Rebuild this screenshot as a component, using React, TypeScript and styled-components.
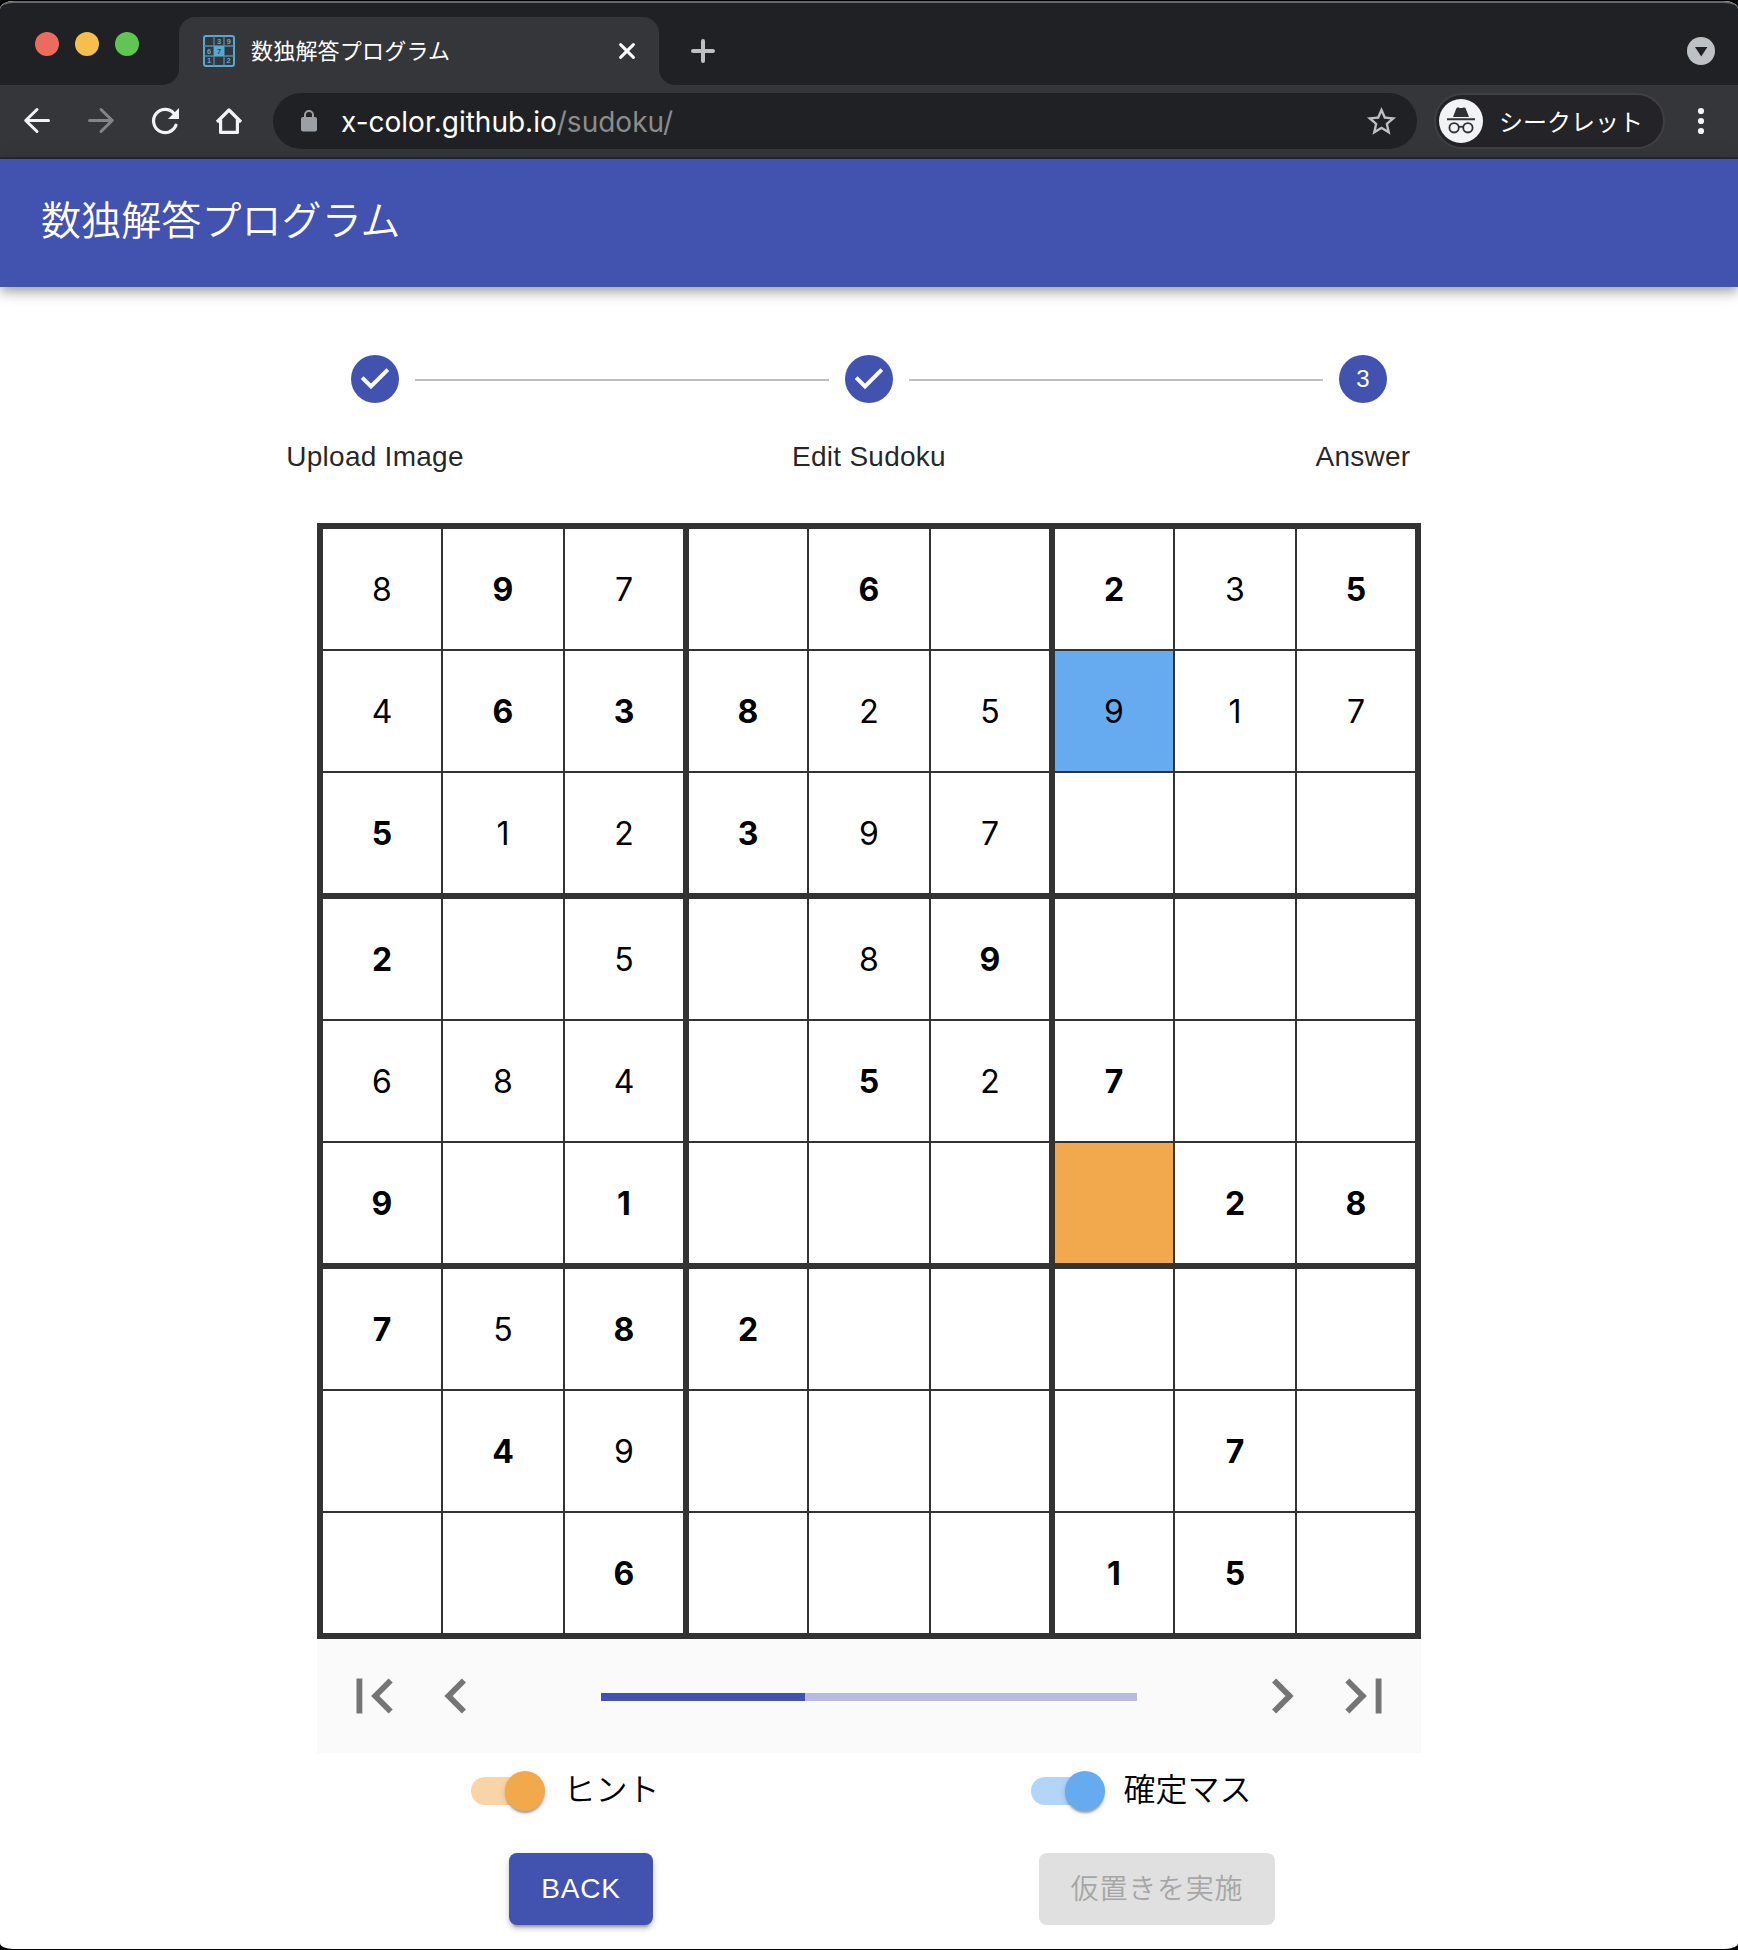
import React from "react";
import styled, { createGlobalStyle } from "styled-components";

const PRIMARY = "#4252af";
const INK = "#333333";
const HINT = "#f2a94e";
const FIXED = "#66aaf0";

const GlobalStyle = createGlobalStyle`
  *, *::before, *::after { box-sizing: border-box; }
  html, body { margin: 0; padding: 0; background: #000; }
  body { font-family: "Liberation Sans", "Noto Sans CJK JP", sans-serif; }
  svg { display: block; flex: none; overflow: visible; }
`;

const Window = styled.div`
  width: 1738px;
  height: 1948px;
  margin-top: 1px;
  background: #fff;
  border-radius: 14px 14px 13px 13px / 8px 8px 6px 6px;
  overflow: hidden;
  display: flex;
  flex-direction: column;
`;

/* ---------- browser chrome ---------- */

const TabStrip = styled.div`
  height: 84px;
  flex: none;
  background: #202124;
  border-top: 2px solid #67666a;
  border-radius: 14px 14px 0 0 / 8px 8px 0 0;
  display: flex;
  align-items: flex-end;
`;

const Lights = styled.div`
  display: flex;
  gap: 16px;
  width: 179px;
  padding: 0 0 29px 35px;
`;

const Light = styled.span<{ $color: string }>`
  width: 24px;
  height: 24px;
  border-radius: 50%;
  background: ${(p) => p.$color};
`;

const Tab = styled.div`
  position: relative;
  width: 480px;
  height: 68px;
  padding: 0 24px;
  border-radius: 16px 16px 0 0;
  background: #35363a;
  display: flex;
  align-items: center;

  &::before,
  &::after {
    content: "";
    position: absolute;
    bottom: 0;
    width: 16px;
    height: 16px;
  }
  &::before {
    left: -16px;
    background: radial-gradient(circle at 0 0, transparent 15.5px, #35363a 16.2px);
  }
  &::after {
    right: -16px;
    background: radial-gradient(circle at 100% 0, transparent 15.5px, #35363a 16.2px);
  }
`;

const TabTitle = styled.span`
  flex: 1;
  margin-left: 16px;
  padding-bottom: 4px;
  color: #fff;
  font: 400 22px/32px "Noto Sans CJK JP", sans-serif;
  letter-spacing: 0.2px;
`;

const NewTab = styled.div`
  flex: 1;
  height: 68px;
  padding: 0 23px 0 32px;
  display: flex;
  align-items: center;
  justify-content: space-between;
`;

const Toolbar = styled.div`
  height: 74px;
  flex: none;
  padding-left: 5px;
  background: #35363a;
  border-bottom: 2px solid #28292c;
  display: flex;
  align-items: center;
`;

const ToolButton = styled.span<{ $width?: number }>`
  width: ${(p) => p.$width ?? 64}px;
  height: 64px;
  display: flex;
  align-items: center;
  justify-content: center;
`;

const Omnibox = styled.div`
  width: 1144px;
  height: 56px;
  margin-left: 12px;
  padding: 0 18px 0 28px;
  border-radius: 28px;
  background: #202124;
  display: flex;
  align-items: center;
`;

const Url = styled.span`
  flex: 1;
  margin-left: 24px;
  padding-top: 1px;
  color: #8b8c8e;
  font: 400 28px/36px Inter, "Liberation Sans", sans-serif;
`;

const Host = styled.span`
  color: #fff;
`;

const Incognito = styled.div`
  width: 231px;
  height: 56px;
  margin-left: 17px;
  padding-left: 3px;
  border: 2px solid #3f3f44;
  border-radius: 28px;
  background: #242428;
  display: flex;
  align-items: center;
  gap: 16px;
  color: #fff;
  font: 400 24px/36px "Noto Sans CJK JP", sans-serif;
`;

/* ---------- page ---------- */

const AppBar = styled.header`
  position: relative;
  height: 128px;
  flex: none;
  padding: 0 41px;
  background: ${PRIMARY};
  color: #fff;
  display: flex;
  align-items: center;
  box-shadow: 0 4px 8px -2px rgba(0, 0, 0, 0.2), 0 8px 10px rgba(0, 0, 0, 0.14),
    0 2px 20px rgba(0, 0, 0, 0.12);
`;

const AppTitle = styled.h1`
  margin: 0 0 11px;
  font: 350 40px/64px "Noto Sans CJK JP", sans-serif;
  letter-spacing: 0.1px;
`;

const Stepper = styled.ol`
  list-style: none;
  margin: 0;
  padding: 68px 0 0 128px;
  height: 236px;
  flex: none;
  display: flex;
`;

const Step = styled.li`
  width: 494px;
  height: 124px;
  display: grid;
  grid-template-columns: 1fr 48px 1fr;
  column-gap: 16px;
  grid-template-rows: 48px 48px;
  row-gap: 28px;
  align-items: center;
`;

const Rail = styled.span<{ $shown: boolean }>`
  height: 2px;
  margin-top: 2px;
  background: ${(p) => (p.$shown ? "#bdbdbd" : "transparent")};
`;

const StepDot = styled.span`
  width: 48px;
  height: 48px;
  border-radius: 50%;
  background: ${PRIMARY};
  color: #fff;
  font-size: 24px;
  line-height: 48px;
  display: flex;
  align-items: center;
  justify-content: center;
`;

const StepLabel = styled.span`
  grid-column: 1 / -1;
  padding-top: 4px;
  text-align: center;
  color: rgba(0, 0, 0, 0.87);
  font-size: 28px;
  line-height: 40px;
  letter-spacing: 0.26px;
`;

const Panel = styled.section`
  width: 1104px;
  margin: 0 auto;
  flex: none;
`;

const Board = styled.div`
  display: grid;
  grid-template-columns: repeat(3, 360px);
  grid-template-rows: repeat(3, 364px);
  gap: 6px;
  padding: 6px;
  background: ${INK};
`;

const Block = styled.div`
  display: grid;
  grid-template-columns: 118px 120px 118px;
  grid-template-rows: repeat(3, 120px);
  gap: 2px;
`;

const Cell = styled.div<{ $given: boolean; $fill: string }>`
  display: flex;
  align-items: center;
  justify-content: center;
  padding-top: 2px;
  background: ${(p) => p.$fill};
  color: #000;
  font: ${(p) => (p.$given ? 700 : 400)} 32px/40px Inter, sans-serif;
`;

const Player = styled.div`
  height: 114px;
  padding: 0 22px;
  background: #fafafa;
  color: #757575;
  display: flex;
  align-items: center;
  justify-content: space-between;
`;

const NavGroup = styled.div`
  display: flex;
  gap: 12px;
`;

const ProgressTrack = styled.div`
  width: 536px;
  height: 8px;
  margin-top: 2px;
  background: #b6bcde;
`;

const ProgressFill = styled.div`
  height: 100%;
  background: ${PRIMARY};
`;

const Pair = styled.div<{ $height: number }>`
  width: 1152px;
  height: ${(p) => p.$height}px;
  margin: 0 auto;
  flex: none;
  display: grid;
  grid-template-columns: 1fr 1fr;
  align-items: center;
  justify-items: center;
`;

const SwitchLabel = styled.label`
  display: flex;
  align-items: center;
  padding-right: 31px;
  color: #000;
  font: 350 32px/48px "Noto Sans CJK JP", sans-serif;
`;

const SwitchText = styled.span`
  margin: -9px 0 0 18px;
`;

const SwitchTrack = styled.span<{ $color: string }>`
  width: 74px;
  height: 28px;
  display: flex;
  align-items: center;
  justify-content: flex-end;
  border-radius: 14px;
  background: linear-gradient(
    to right,
    color-mix(in srgb, ${(p) => p.$color} 50%, white) 54px,
    transparent 54px
  );
`;

const SwitchThumb = styled.span<{ $color: string }>`
  width: 40px;
  height: 40px;
  flex: none;
  border-radius: 50%;
  background: ${(p) => p.$color};
  box-shadow: 0 4px 2px -2px rgba(0, 0, 0, 0.2), 0 2px 2px rgba(0, 0, 0, 0.14),
    0 2px 6px rgba(0, 0, 0, 0.12);
`;

const Button = styled.button`
  height: 72px;
  padding: 0 32px;
  border: 0;
  border-radius: 8px;
  background: ${PRIMARY};
  color: #fff;
  font: 350 28px/48px "Liberation Sans", "Noto Sans CJK JP", sans-serif;
  letter-spacing: 0.8px;
  box-shadow: 0 6px 2px -4px rgba(0, 0, 0, 0.2), 0 4px 4px rgba(0, 0, 0, 0.14),
    0 2px 10px rgba(0, 0, 0, 0.12);

  &:disabled {
    padding: 1px 31.5px 0;
    background: #e0e0e0;
    color: #a6a6a6;
    box-shadow: none;
  }
`;

/* ---------- icons ---------- */

const Favicon = () => (
  <svg width="32" height="32" viewBox="0 0 32 32">
    <rect x="1" y="1" width="30" height="30" rx="2" fill="none" stroke="#58a9d0" strokeWidth="2" />
    <path d="M11 1V31M21 1V31M1 11H31M1 21H31" stroke="#4a8fb2" strokeWidth="1.3" />
    <rect x="11" y="11" width="10" height="10" fill="#58a9d0" />
    <g fontFamily="Liberation Sans, sans-serif" fontWeight="700" fontSize="7.5" textAnchor="middle" fill="#58a9d0">
      <text x="16" y="9">3</text>
      <text x="25.8" y="9">9</text>
      <text x="6.2" y="18.7">6</text>
      <text x="16" y="18.7" fill="#2b4a5c">7</text>
      <text x="6.2" y="28.4">1</text>
      <text x="25.6" y="28.4">2</text>
    </g>
  </svg>
);

const CloseIcon = () => (
  <svg width="16" height="16" viewBox="0 0 16 16" stroke="#fff" strokeWidth="3" strokeLinecap="round">
    <path d="M1.6 1.6L14.4 14.4M14.4 1.6L1.6 14.4" />
  </svg>
);

const PlusIcon = () => (
  <svg width="24" height="24" viewBox="0 0 24 24" stroke="#bdc1c6" strokeWidth="4" strokeLinecap="round">
    <path d="M2 12H22M12 2V22" />
  </svg>
);

const TabSearchIcon = () => (
  <svg width="28" height="28" viewBox="0 0 28 28">
    <circle cx="14" cy="14" r="14" fill="#bdc1c6" />
    <path d="M8 10H20.4L14.2 19.5Z" fill="#202124" />
  </svg>
);

const ArrowIcon = ({ forward = false }: { forward?: boolean }) => (
  <svg
    width="28"
    height="28"
    viewBox="0 0 28 28"
    fill="none"
    stroke={forward ? "#848587" : "#f1f3f4"}
    strokeWidth="3"
    strokeLinecap="round"
    strokeLinejoin="round"
  >
    <path d={forward ? "M2.5 13.5H25M14 2.5L25.3 13.5L14 24.5" : "M25.5 13.5H3M14 2.5L2.7 13.5L14 24.5"} />
  </svg>
);

const ReloadIcon = () => (
  <svg width="28" height="28" viewBox="0 0 28 28">
    <path d="M25 18.2A11.6 11.6 0 1 1 22.6 6" fill="none" stroke="#f1f3f4" strokeWidth="3.2" strokeLinecap="round" />
    <path d="M28 1V12H17Z" fill="#f1f3f4" />
  </svg>
);

const HomeIcon = () => (
  <svg width="28" height="28" viewBox="0 0 28 28" fill="none" stroke="#f1f3f4" strokeWidth="3.2" strokeLinejoin="round">
    <path d="M5.6 12.5V25.4H22.4V12.5" />
    <path d="M2 15L14 3L26 15" />
  </svg>
);

const LockIcon = () => (
  <svg width="16" height="22" viewBox="0 0 16 22">
    <rect x="0" y="7" width="16" height="14.5" rx="2" fill="#9aa0a6" />
    <path d="M4 8V5a4 4 0 0 1 8 0V8" fill="none" stroke="#9aa0a6" strokeWidth="2" />
  </svg>
);

const StarIcon = () => (
  <svg width="35" height="35" viewBox="0 0 24 24" fill="#bebfc1">
    <path d="M22 9.24l-7.19-.62L12 2 9.19 8.63 2 9.24l5.46 4.73L5.82 21 12 17.27 18.18 21l-1.63-7.03L22 9.24zM12 15.4l-3.76 2.27 1-4.28-3.32-2.88 4.38-.38L12 6.1l1.71 4.04 4.38.38-3.32 2.88 1 4.28L12 15.4z" />
  </svg>
);

const IncognitoIcon = () => (
  <svg width="44" height="44" viewBox="0 0 44 44">
    <circle cx="22" cy="22" r="22" fill="#f1f3f4" />
    <path d="M14 18L17.3 9.5Q17.9 8 19.4 8.5Q22 9.5 24.6 8.5Q26.1 8 26.7 9.5L30 18Z" fill="#303134" />
    <path d="M8 20.2H36" stroke="#303134" strokeWidth="2" />
    <g fill="none" stroke="#303134" strokeWidth="1.8">
      <circle cx="15.1" cy="28.8" r="4.7" />
      <circle cx="28.9" cy="28.8" r="4.7" />
      <path d="M19.6 28.2Q22 27.2 24.4 28.2" />
    </g>
  </svg>
);

const MenuIcon = () => (
  <svg width="6" height="28" viewBox="0 0 6 28" fill="#f1f3f4">
    <circle cx="3" cy="4" r="3.1" />
    <circle cx="3" cy="14" r="3.1" />
    <circle cx="3" cy="24" r="3.1" />
  </svg>
);

const CheckIcon = () => (
  <svg width="48" height="48" viewBox="0 0 24 24" fill="none" stroke="#fff" strokeWidth="2">
    <path d="M5.6 11.3L10 15.7L18.4 7.3" />
  </svg>
);

const NAV_PATHS = {
  first: "M18.41 16.59L13.82 12l4.59-4.59L17 6l-6 6 6 6zM6 6h2v12H6z",
  previous: "M15.41 16.59L10.83 12l4.58-4.59L14 6l-6 6 6 6 1.41-1.41z",
  next: "M8.59 16.59L13.17 12 8.59 7.41 10 6l6 6-6 6-1.41-1.41z",
  last: "M5.59 7.41L10.18 12l-4.59 4.59L7 18l6-6-6-6zM16 6h2v12h-2z",
};

const NavIcon = ({ name }: { name: keyof typeof NAV_PATHS }) => (
  <svg width="70" height="70" viewBox="0 0 24 24" fill="currentColor">
    <path d={NAV_PATHS[name]} />
  </svg>
);

/* ---------- data ---------- */

/* "." is an empty square, a trailing "*" marks a digit of the original puzzle */
const ROWS = [
  "8 9* 7 . 6* . 2* 3 5*",
  "4 6* 3* 8* 2 5 9 1 7",
  "5* 1 2 3* 9 7 . . .",
  "2* . 5 . 8 9* . . .",
  "6 8 4 . 5* 2 7* . .",
  "9* . 1* . . . . 2* 8*",
  "7* 5 8* 2* . . . . .",
  ". 4* 9 . . . . 7* .",
  ". . 6* . . . 1* 5* .",
].map((row) => row.split(" "));

const FILLS: Record<string, string> = { "1-6": FIXED, "5-6": HINT };
const THREE = [0, 1, 2];
const STEPS = ["Upload Image", "Edit Sudoku", "Answer"];
const ACTIVE_STEP = 2;
const PROGRESS = 38;

function SudokuBoard() {
  return (
    <Board>
      {THREE.flatMap((br) =>
        THREE.map((bc) => (
          <Block key={`${br}${bc}`}>
            {THREE.flatMap((r) =>
              THREE.map((c) => {
                const row = br * 3 + r;
                const col = bc * 3 + c;
                const value = ROWS[row][col];
                return (
                  <Cell
                    key={`${row}-${col}`}
                    $given={value.endsWith("*")}
                    $fill={FILLS[`${row}-${col}`] ?? "#fff"}
                  >
                    {value === "." ? "" : value[0]}
                  </Cell>
                );
              })
            )}
          </Block>
        ))
      )}
    </Board>
  );
}

function Toggle({ color, children }: { color: string; children: React.ReactNode }) {
  return (
    <SwitchLabel>
      <SwitchTrack $color={color}>
        <SwitchThumb $color={color} />
      </SwitchTrack>
      <SwitchText>{children}</SwitchText>
    </SwitchLabel>
  );
}

export default function App() {
  return (
    <>
      <GlobalStyle />
      <Window>
        <TabStrip>
          <Lights>
            <Light $color="#ed6a5e" />
            <Light $color="#f5bf4f" />
            <Light $color="#61c554" />
          </Lights>
          <Tab>
            <Favicon />
            <TabTitle>数独解答プログラム</TabTitle>
            <CloseIcon />
          </Tab>
          <NewTab>
            <PlusIcon />
            <TabSearchIcon />
          </NewTab>
        </TabStrip>
        <Toolbar>
          <ToolButton><ArrowIcon /></ToolButton>
          <ToolButton><ArrowIcon forward /></ToolButton>
          <ToolButton><ReloadIcon /></ToolButton>
          <ToolButton><HomeIcon /></ToolButton>
          <Omnibox>
            <LockIcon />
            <Url><Host>x-color.github.io</Host>/sudoku/</Url>
            <StarIcon />
          </Omnibox>
          <Incognito>
            <IncognitoIcon />
            シークレット
          </Incognito>
          <ToolButton $width={72}><MenuIcon /></ToolButton>
        </Toolbar>

        <AppBar>
          <AppTitle>数独解答プログラム</AppTitle>
        </AppBar>

        <Stepper>
          {STEPS.map((label, i) => (
            <Step key={label}>
              <Rail $shown={i > 0} />
              <StepDot>{i < ACTIVE_STEP ? <CheckIcon /> : i + 1}</StepDot>
              <Rail $shown={i < STEPS.length - 1} />
              <StepLabel>{label}</StepLabel>
            </Step>
          ))}
        </Stepper>

        <Panel>
          <SudokuBoard />
          <Player>
            <NavGroup>
              <NavIcon name="first" />
              <NavIcon name="previous" />
            </NavGroup>
            <ProgressTrack>
              <ProgressFill style={{ width: `${PROGRESS}%` }} />
            </ProgressTrack>
            <NavGroup>
              <NavIcon name="next" />
              <NavIcon name="last" />
            </NavGroup>
          </Player>
        </Panel>

        <Pair $height={76}>
          <Toggle color={HINT}>ヒント</Toggle>
          <Toggle color={FIXED}>確定マス</Toggle>
        </Pair>
        <Pair $height={120}>
          <Button>BACK</Button>
          <Button disabled>仮置きを実施</Button>
        </Pair>
      </Window>
    </>
  );
}
